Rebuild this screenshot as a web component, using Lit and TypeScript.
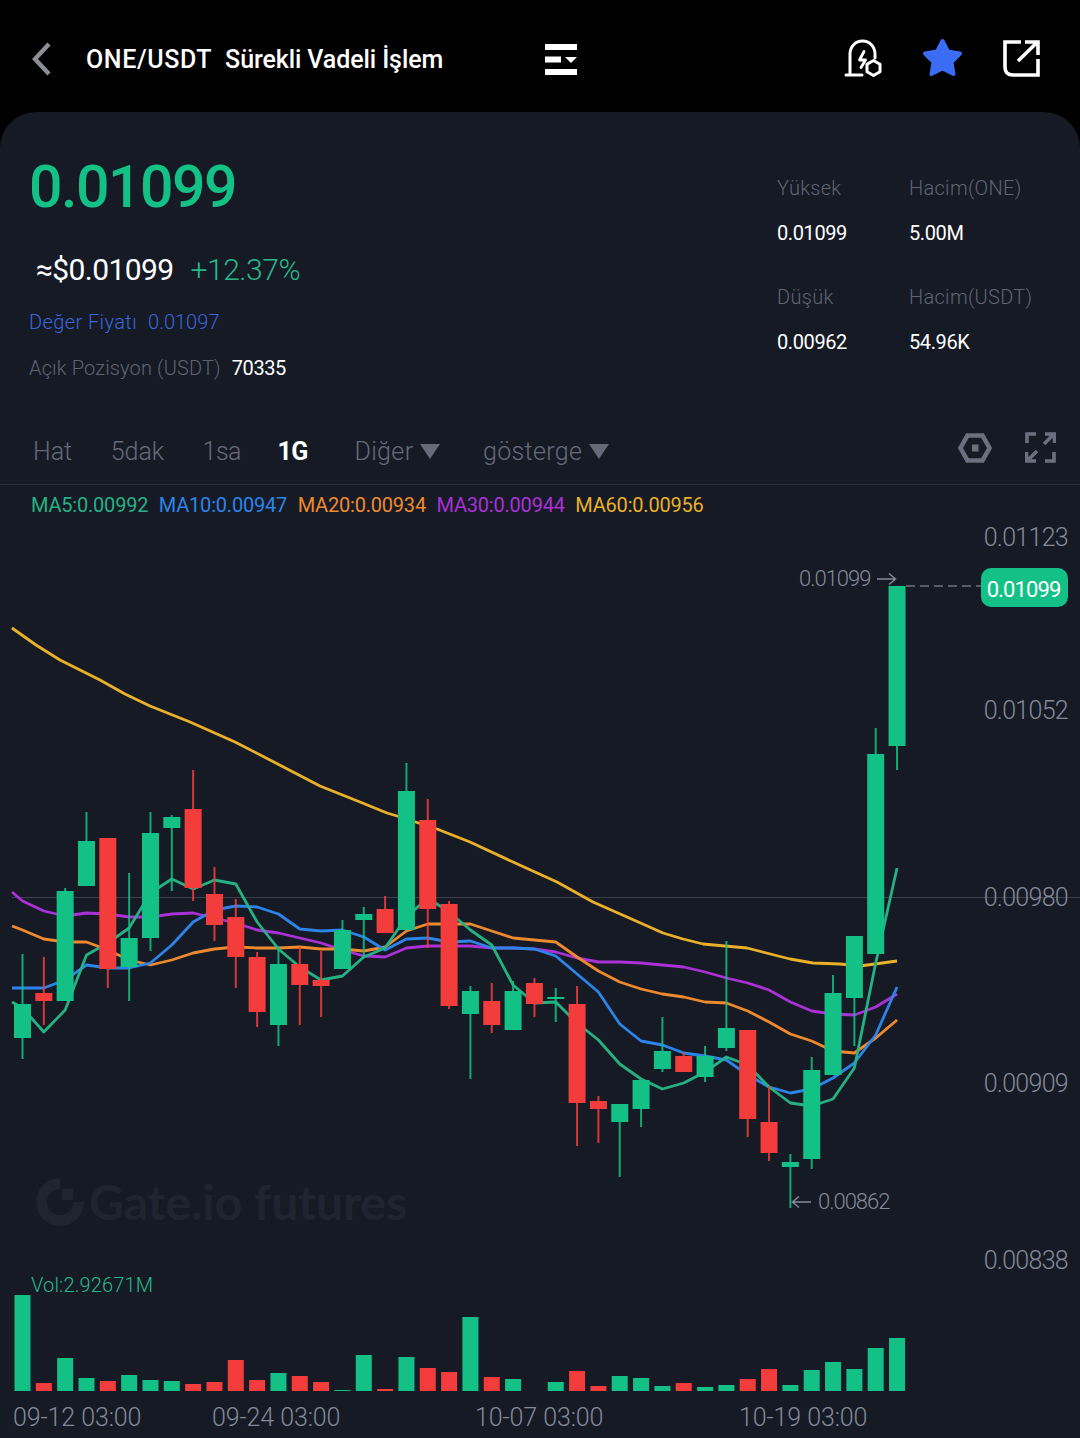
import { LitElement, html, svg, css, unsafeCSS } from 'lit'
import { customElement } from 'lit/decorators.js'

const CHART_TOP = 525
const STEP = 21.33
const FIRST_X = 22.5
const BODY_W = 17
const GREEN = '#13c085'
const RED = '#f33d3d'

const cx = (i: number) => FIRST_X + i * STEP

// [wick top, body top, body bottom, wick bottom, colour], page coordinates
type Candle = [number, number, number, number, 'g' | 'r']
const CANDLES: Candle[] = [
  [954, 1004, 1038, 1059, 'g'], [957, 993, 1001, 1025, 'r'], [888, 891, 1001, 1001, 'g'],
  [812, 841, 886, 886, 'g'], [838, 838, 969, 988, 'r'], [873, 938, 967, 1001, 'g'],
  [812, 833, 938, 951, 'g'], [815, 817, 828, 891, 'g'], [770, 809, 888, 901, 'r'],
  [867, 894, 925, 941, 'r'], [899, 917, 957, 988, 'r'], [952, 957, 1012, 1027, 'r'],
  [946, 964, 1025, 1046, 'g'], [947, 964, 985, 1025, 'r'], [951, 980, 986, 1017, 'r'],
  [920, 930, 969, 969, 'g'], [907, 914, 920, 957, 'g'], [896, 909, 933, 933, 'r'],
  [763, 791, 930, 930, 'g'], [799, 820, 909, 948, 'r'], [901, 904, 1006, 1009, 'r'],
  [986, 991, 1014, 1079, 'g'], [983, 1001, 1025, 1033, 'r'], [981, 991, 1030, 1030, 'g'],
  [978, 983, 1004, 1017, 'r'], [988, 997, 999, 1022, 'g'], [986, 1004, 1103, 1146, 'r'],
  [1096, 1101, 1109, 1143, 'r'], [1104, 1104, 1122, 1177, 'g'], [1080, 1080, 1109, 1127, 'g'],
  [1017, 1051, 1069, 1072, 'g'], [1052, 1056, 1072, 1072, 'r'], [1046, 1056, 1077, 1082, 'g'],
  [941, 1028, 1048, 1051, 'g'], [1030, 1030, 1119, 1137, 'r'], [1086, 1122, 1153, 1161, 'r'],
  [1154, 1162, 1167, 1208, 'g'], [1057, 1070, 1159, 1169, 'g'], [975, 993, 1075, 1075, 'g'],
  [936, 936, 998, 1046, 'g'], [728, 754, 954, 954, 'g'], [586, 586, 746, 770, 'g'],
]

// top of each volume bar; the baseline is y = 1391, 0 means no bar
const VOLUME = [
  1295, 1383, 1358, 1378, 1381, 1375, 1380, 1381, 1384, 1382, 1360, 1380, 1373, 1376,
  1382, 1390, 1355, 1389, 1357, 1368, 1372, 1317, 1377, 1379, 0, 1382, 1371, 1386,
  1376, 1378, 1386, 1383, 1387, 1385, 1379, 1369, 1385, 1370, 1362, 1369, 1348, 1338,
]

// moving averages: first value is the start of the line at x = 12, then one per candle
const MA_LINES: { color: string; ys: number[] }[] = [
  {
    color: '#a931d6',
    ys: [892, 901, 911, 916, 913, 914, 917, 917, 914, 913, 918, 923, 930, 933, 938, 943, 950,
      956, 957, 948, 946, 946, 946, 948, 948, 949, 952, 958, 962, 962, 963, 965, 967, 972,
      978, 983, 990, 1002, 1011, 1014, 1015, 1007, 994],
  },
  {
    color: '#ee8a2d',
    ys: [926, 930, 939, 942, 942, 950, 960, 965, 960, 953, 949, 947, 948, 948, 947, 949, 949,
      951, 947, 931, 924, 924, 924, 931, 938, 940, 942, 957, 971, 982, 989, 994, 997, 1002,
      1003, 1011, 1022, 1034, 1041, 1051, 1053, 1038, 1020],
  },
  {
    color: '#2c84e8',
    ys: [988, 988, 988, 980, 965, 968, 968, 963, 945, 922, 910, 906, 907, 914, 929, 931, 930,
      937, 950, 939, 938, 942, 941, 948, 948, 949, 956, 974, 992, 1024, 1041, 1045, 1053,
      1056, 1060, 1075, 1087, 1093, 1089, 1078, 1063, 1035, 987],
  },
  {
    color: '#26b184',
    ys: [1002, 1008, 1032, 1010, 955, 943, 928, 893, 879, 889, 880, 884, 922, 949, 967, 980,
      976, 957, 948, 917, 898, 912, 930, 945, 985, 1003, 1002, 1023, 1040, 1064, 1079, 1089,
      1083, 1072, 1057, 1065, 1087, 1103, 1106, 1099, 1068, 963, 868],
  },
]

const MA60_POINTS = [
  [12, 628], [36, 645], [60, 660], [100, 680], [125, 694], [150, 706], [190, 722], [235, 742],
  [270, 760], [320, 786], [360, 802], [387, 813], [397, 816], [437, 829], [470, 842], [513, 862],
  [557, 882], [593, 902], [627, 917], [663, 933], [683, 939], [703, 944], [747, 948], [790, 959],
  [813, 963], [840, 964], [860, 966], [897, 961],
]

const MA_LEGEND = [
  ['MA5:0.00992', '#26b184'], ['MA10:0.00947', '#2c84e8'], ['MA20:0.00934', '#ee8a2d'],
  ['MA30:0.00944', '#a931d6'], ['MA60:0.00956', '#e9b028'],
]

const PRICE_AXIS: [string, number][] = [
  ['0.01123', 538], ['0.01052', 711], ['0.00980', 898], ['0.00909', 1084], ['0.00838', 1261],
]

const DATES: [string, number][] = [
  ['09-12 03:00', 13], ['09-24 03:00', 212], ['10-07 03:00', 475], ['10-19 03:00', 739],
]

const maPoints = (ys: number[]) =>
  ys.map((y, i) => `${i === 0 ? 12 : cx(i - 1)},${y}`).join(' ')

@customElement('app-root')
export class AppRoot extends LitElement {
  static styles = css`
    :host {
      display: block;
      width: 1080px;
      height: 1438px;
      overflow: hidden;
      background: #000;
      font-family: Roboto, 'Noto Sans', sans-serif;
    }

    .header {
      display: flex;
      align-items: center;
      height: 112px;
      padding-top: 6px;
      box-sizing: border-box;
      color: #fff;
    }
    .title {
      display: flex;
      gap: 13px;
      margin-left: 32px;
      width: 459px;
      font-size: 25px;
      font-weight: 500;
      white-space: pre;
    }
    .pair { letter-spacing: 0.6px; }
    .kind { letter-spacing: -0.1px; }
    .icon {
      display: block;
      flex: none;
    }
    .back { margin-left: 30px; }
    .menu { margin-top: 2px; }
    .h-right {
      display: flex;
      align-items: center;
      gap: 39.5px;
      margin-left: auto;
      margin-right: 40px;
      margin-bottom: 2px;
    }

    .panel {
      height: 1326px;
      background: #161a25;
      border-radius: 36px 36px 0 0;
      overflow: hidden;
    }

    .summary {
      display: flex;
      justify-content: space-between;
      padding: 39px 0 0 29px;
      height: 266px;
      box-sizing: border-box;
    }
    .price {
      font-size: 59px;
      line-height: 70px;
      font-weight: 500;
      color: ${unsafeCSS(GREEN)};
      letter-spacing: -1.5px;
      position: relative;
      top: 1px;
    }
    .fiat {
      display: flex;
      gap: 17px;
      margin: 29px 0 0 7px;
      font-size: 30px;
      line-height: 40px;
      font-weight: 400;
      color: #fff;
      letter-spacing: -0.6px;
    }
    .change {
      color: #25b98c;
      font-weight: 300;
      letter-spacing: -0.45px;
    }
    .row {
      display: flex;
      gap: 11px;
      margin-top: 18px;
      font-size: 20px;
      line-height: 28px;
      font-weight: 300;
    }
    .mark { color: #3a66de; }
    .mark .name { letter-spacing: 0.4px; }
    .muted { color: #5f6473; }
    .name-long { letter-spacing: 0.15px; }
    .white {
      color: #fff;
      font-weight: 400;
      letter-spacing: -0.4px;
    }

    .stats {
      display: grid;
      grid-template-columns: 132px 171px;
      grid-template-rows: 45px 64px 45px 28px;
      margin-top: 23px;
      width: 303px;
      font-size: 20px;
      line-height: 28px;
      font-weight: 300;
    }
    .stats .muted { letter-spacing: 0.3px; }

    .tabs {
      display: flex;
      align-items: center;
      gap: 38.5px;
      padding: 2px 0 0 33px;
      margin-top: 39px;
      border-bottom: 1px solid #2a2e39;
      box-sizing: border-box;
      height: 68px;
      font-size: 25px;
      font-weight: 300;
      color: #656a79;
    }
    .tab.tight { letter-spacing: -0.5px; }
    .tab.active {
      color: #fff;
      font-weight: 700;
      margin: 0 8px 0 -2px;
      letter-spacing: -0.5px;
    }
    .tab.more {
      display: flex;
      align-items: center;
      margin-right: 4px;
    }
    .tab.more span { letter-spacing: 0.35px; }
    .tab.more i {
      width: 0;
      height: 0;
      margin-left: 7px;
      border-left: 10px solid transparent;
      border-right: 10px solid transparent;
      border-top: 15px solid #656a79;
    }
    .tools {
      display: flex;
      align-items: center;
      gap: 33px;
      margin-left: auto;
      margin-right: 24px;
      padding-bottom: 8px;
    }

    .legend {
      display: flex;
      gap: 10.5px;
      height: 40px;
      padding-left: 31px;
      align-items: center;
      font-size: 20px;
      font-weight: 400;
      letter-spacing: -0.2px;
    }

    .chart {
      position: relative;
      height: 913px;
    }
    .canvas {
      position: absolute;
      inset: 0;
    }
    .label {
      position: absolute;
      line-height: 30px;
      white-space: nowrap;
    }
    .axis {
      right: 12px;
      font-size: 25px;
      font-weight: 300;
      letter-spacing: -0.7px;
      color: #848998;
    }
    .date {
      font-size: 25px;
      font-weight: 300;
      letter-spacing: -0.1px;
      color: #848998;
    }
    .extreme {
      font-size: 22px;
      font-weight: 300;
      letter-spacing: -1px;
      color: #848998;
    }
    .tag {
      position: absolute;
      left: 981px;
      top: 43px;
      width: 87px;
      height: 39px;
      padding-right: 2px;
      box-sizing: border-box;
      border-radius: 10px;
      background: ${unsafeCSS(GREEN)};
      color: #fff;
      font-size: 22px;
      letter-spacing: -0.9px;
      line-height: 43px;
      text-align: center;
    }
    .vol {
      font-size: 20px;
      font-weight: 300;
      letter-spacing: 0.15px;
      color: #25b98c;
    }
    .brand {
      position: absolute;
      left: 36px;
      top: 653px;
      display: flex;
      align-items: center;
      gap: 5px;
      font-family: Lato, Roboto, sans-serif;
      font-size: 48px;
      font-weight: 700;
      line-height: 48px;
      color: #1f2430;
    }
  `

  private _chartSvg() {
    return svg`
      <line x1="12" x2="1080" y1="897.5" y2="897.5" stroke="#3c404c" stroke-width="1"/>
      <line x1="906" x2="985" y1="586" y2="586" stroke="#6c7180" stroke-width="1.4" stroke-dasharray="9 5"/>

      <polyline points=${MA60_POINTS.map(p => p.join(',')).join(' ')} fill="none"
        stroke="#e9b028" stroke-width="2.8" stroke-linejoin="round"/>
      ${MA_LINES.map(l => svg`
        <polyline points=${maPoints(l.ys)} fill="none" stroke=${l.color}
          stroke-width="2.8" stroke-linejoin="round"/>`)}

      ${CANDLES.map((c, i) => {
        const fill = c[4] === 'g' ? GREEN : RED
        return svg`
          <rect x=${cx(i) - 1} y=${c[0]} width="2" height=${c[3] - c[0]} fill=${fill} opacity="0.85"/>
          <rect x=${cx(i) - BODY_W / 2} y=${c[1]} width=${BODY_W} height=${Math.max(c[2] - c[1], 1)} fill=${fill}/>`
      })}

      ${VOLUME.map((top, i) => top ? svg`
        <rect x=${cx(i) - 8} y=${top} width="16" height=${1391 - top}
          fill=${CANDLES[i][4] === 'g' ? GREEN : RED}/>` : '')}

      <path d="M877 579H895M889 573.5L895.5 579L889 584.5" fill="none" stroke="#848998" stroke-width="1.5"/>
      <path d="M811 1202H793M799 1196.5L792.5 1202L799 1207.5" fill="none" stroke="#848998" stroke-width="1.5"/>
    `
  }

  render() {
    return html`
      <div class="header">
        <svg class="icon back" width="24" height="36" viewBox="0 0 24 36" fill="none">
          <path d="M19 3L5 18L19 33" stroke="#8b8e96" stroke-width="4.4"/>
        </svg>
        <div class="title"><span class="pair">ONE/USDT</span><span class="kind">Sürekli Vadeli İşlem</span></div>
        <svg class="icon menu" width="33" height="32" viewBox="0 0 33 32" fill="#fff">
          <rect x="0" y="0" width="32" height="6"/>
          <rect x="0" y="12.5" width="16" height="6"/>
          <path d="M20 13H32L26 19Z"/>
          <rect x="0" y="25" width="32" height="6"/>
        </svg>
        <div class="h-right">
          <svg class="icon" width="38" height="38" viewBox="0 0 38 38" fill="none" stroke="#fff" stroke-width="3" stroke-linecap="round" stroke-linejoin="round">
            <path d="M2 36H18M6 36V15C6 7.5 11.5 2 18.5 2C25.5 2 31 7.5 31 15V19"/>
            <path d="M20 12.5L15.5 21H21.5L17 28.5" stroke-width="2.8"/>
            <path d="M29.5 21.5L36 25.3V32.7L29.5 36.5L23 32.7V25.3Z"/>
          </svg>
          <svg class="icon" width="41" height="40" viewBox="0 0 41 40" fill="#3a6cf4" stroke="#3a6cf4" stroke-width="4" stroke-linejoin="round">
            <path d="M20.5 3L26 13.5L38 15.5L29.5 24L31.5 36L20.5 30.5L9.5 36L11.5 24L3 15.5L15 13.5Z"/>
          </svg>
          <svg class="icon" width="38" height="38" viewBox="0 0 38 38" fill="none" stroke="#fff" stroke-width="3.6">
            <path d="M19 3H3V28Q3 36 11 36H36V20"/>
            <path d="M16 22L35.5 3M23 3H36V16"/>
          </svg>
        </div>
      </div>

      <div class="panel">
        <div class="summary">
          <div>
            <div class="price">0.01099</div>
            <div class="fiat"><span>≈$0.01099</span><span class="change">+12.37%</span></div>
            <div class="row mark"><span class="name">Değer Fiyatı</span><span>0.01097</span></div>
            <div class="row"><span class="muted name-long">Açık Pozisyon (USDT)</span><span class="white">70335</span></div>
          </div>
          <div class="stats">
            <span class="muted">Yüksek</span><span class="muted">Hacim(ONE)</span>
            <span class="white">0.01099</span><span class="white">5.00M</span>
            <span class="muted">Düşük</span><span class="muted">Hacim(USDT)</span>
            <span class="white">0.00962</span><span class="white">54.96K</span>
          </div>
        </div>

        <div class="tabs">
          <span class="tab">Hat</span>
          <span class="tab">5dak</span>
          <span class="tab tight">1sa</span>
          <span class="tab active">1G</span>
          <span class="tab more"><span>Diğer</span><i></i></span>
          <span class="tab more"><span>gösterge</span><i></i></span>
          <div class="tools">
            <svg class="icon" width="34" height="30" viewBox="0 0 34 30" fill="none" stroke="#6b7080" stroke-width="4.5">
              <path d="M9.5 2.5H24.5L31.5 15L24.5 27.5H9.5L2.5 15Z"/>
              <rect x="14" y="11.5" width="6.5" height="7" fill="#6b7080" stroke="none"/>
            </svg>
            <svg class="icon" width="31" height="31" viewBox="0 0 31 31" fill="none" stroke="#6b7080" stroke-width="3.6">
              <path d="M2 11V2H11M20 29H29V20"/>
              <path d="M19 12L29 2M20 2H29.5V11M12 19L2 29M11 29H1.5V20"/>
            </svg>
          </div>
        </div>

        <div class="legend">
          ${MA_LEGEND.map(([t, c]) => html`<span style="color:${c}">${t}</span>`)}
        </div>

        <div class="chart">
          <div class="brand">
            <svg class="icon" width="48" height="48" viewBox="0 0 48 48" fill="#1f2430">
              <path d="M24 0V11A13 13 0 1 0 37 24H48A24 24 0 1 1 24 0Z"/>
              <rect x="26" y="11" width="11" height="11"/>
            </svg>
            <span>Gate.io futures</span>
          </div>

          <svg class="canvas" width="1080" height="913" viewBox="0 ${CHART_TOP} 1080 913">
            ${this._chartSvg()}
          </svg>

          ${PRICE_AXIS.map(([t, y]) => html`
            <span class="label axis" style="top:${y - 15 - CHART_TOP}px">${t}</span>`)}
          <span class="label extreme" style="left:799px;top:${579 - 15 - CHART_TOP}px">0.01099</span>
          <span class="label extreme" style="left:818px;top:${1202 - 15 - CHART_TOP}px">0.00862</span>
          <div class="tag">0.01099</div>
          <span class="label vol" style="left:31px;top:${1285 - 15 - CHART_TOP}px">Vol:2.92671M</span>
          ${DATES.map(([t, x]) => html`
            <span class="label date" style="left:${x}px;top:${1418 - 15 - CHART_TOP}px">${t}</span>`)}
        </div>
      </div>
    `
  }
}
